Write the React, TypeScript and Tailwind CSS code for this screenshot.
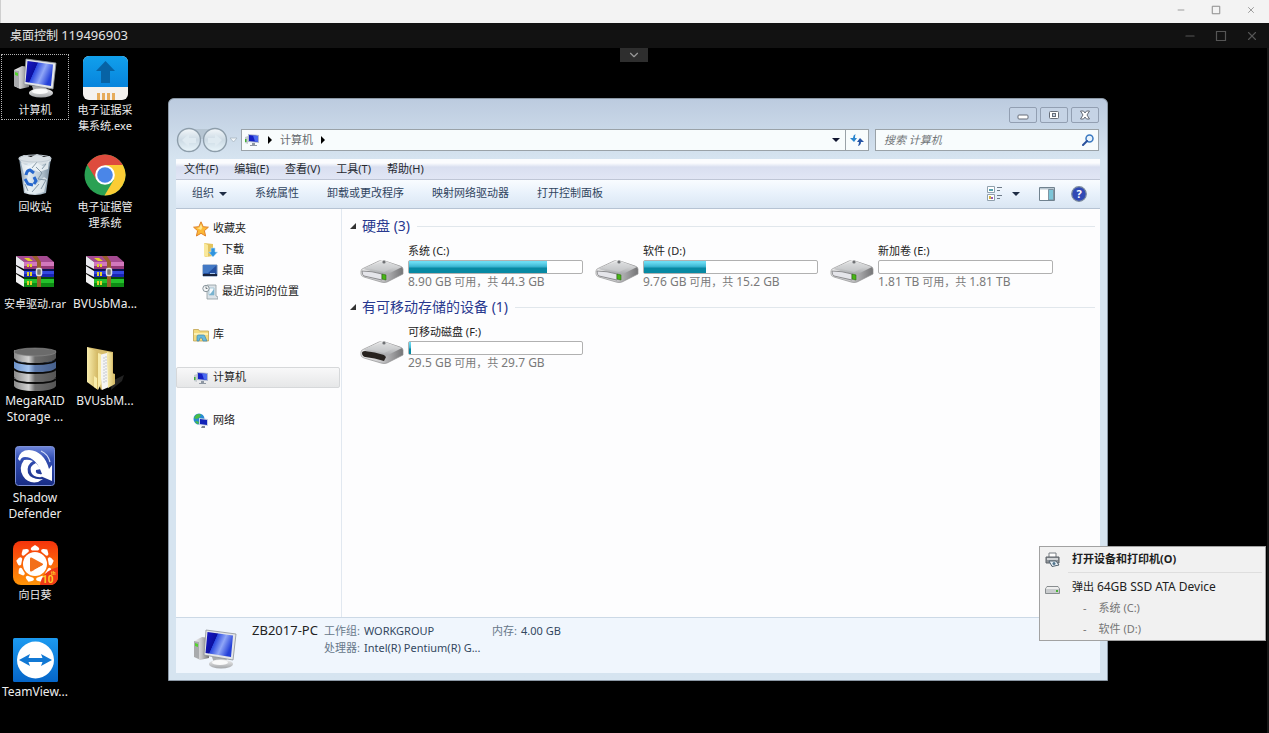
import { useState, type ReactNode } from 'react';
import { ChevronDown, Minus, X } from 'lucide-react';

// gradients shared by every drawing on the page
function Gradients() {
  return (
    <svg className="absolute h-0 w-0" aria-hidden="true">
      <defs>
        <linearGradient id="screen" x1="0" y1="0" x2="1" y2="0.4">
          <stop offset="0" stopColor="#1a1acc" />
          <stop offset="0.4" stopColor="#0c10a0" />
          <stop offset="0.42" stopColor="#2b49e0" />
          <stop offset="0.7" stopColor="#8fa6f7" />
          <stop offset="1" stopColor="#2440d8" />
        </linearGradient>
        <linearGradient id="metal" x1="0" y1="0" x2="0" y2="1">
          <stop offset="0" stopColor="#f4f4f4" />
          <stop offset="1" stopColor="#a3a5a8" />
        </linearGradient>
        <linearGradient id="metalSide" x1="0" y1="0" x2="1" y2="0">
          <stop offset="0" stopColor="#f5f5f5" />
          <stop offset="0.5" stopColor="#c4c4c6" />
          <stop offset="1" stopColor="#747476" />
        </linearGradient>
        <linearGradient id="steel" x1="0" y1="0" x2="1" y2="0">
          <stop offset="0" stopColor="#8a8a8a" />
          <stop offset="0.35" stopColor="#d2d2d2" />
          <stop offset="0.5" stopColor="#6c6c6c" />
          <stop offset="1" stopColor="#555" />
        </linearGradient>
        <linearGradient id="steelBlue" x1="0" y1="0" x2="1" y2="0">
          <stop offset="0" stopColor="#6d94cc" />
          <stop offset="0.35" stopColor="#a5c4ee" />
          <stop offset="0.5" stopColor="#5c79aa" />
          <stop offset="1" stopColor="#46608c" />
        </linearGradient>
        <linearGradient id="sky" x1="0" y1="0" x2="0" y2="1">
          <stop offset="0" stopColor="#11a0ec" />
          <stop offset="1" stopColor="#0784dc" />
        </linearGradient>
        <linearGradient id="viewer" x1="0" y1="0" x2="0" y2="1">
          <stop offset="0" stopColor="#1c9af0" />
          <stop offset="1" stopColor="#0565c8" />
        </linearGradient>
        <linearGradient id="orange" x1="0" y1="0" x2="0" y2="1">
          <stop offset="0" stopColor="#f5330c" />
          <stop offset="1" stopColor="#ff9508" />
        </linearGradient>
        <linearGradient id="shield" x1="0" y1="0" x2="0" y2="1">
          <stop offset="0" stopColor="#6e86da" />
          <stop offset="0.3" stopColor="#3450b4" />
          <stop offset="1" stopColor="#182c84" />
        </linearGradient>
        <linearGradient id="paper" x1="0" y1="0" x2="1" y2="0">
          <stop offset="0" stopColor="#f9eeae" />
          <stop offset="1" stopColor="#d3b863" />
        </linearGradient>
        <linearGradient id="glass" x1="0" y1="0" x2="1" y2="0">
          <stop offset="0" stopColor="#7b8fa0" />
          <stop offset="0.3" stopColor="#e2ecf3" />
          <stop offset="0.7" stopColor="#b4c5d1" />
          <stop offset="1" stopColor="#75899a" />
        </linearGradient>
        <linearGradient id="orb" x1="0" y1="0" x2="0" y2="1">
          <stop offset="0" stopColor="#f3f7fa" />
          <stop offset="0.5" stopColor="#ccdae4" />
          <stop offset="1" stopColor="#eaf6fb" />
        </linearGradient>
      </defs>
    </svg>
  );
}

function ComputerIcon({ className }: { className: string }) {
  return (
    <svg className={className} viewBox="0 0 44 40" aria-hidden="true">
      <path d="M1 12 9 8l7 1v20l-9 2-6-3z" fill="url(#metalSide)" />
      <path d="M1 12 6 13v17l-5-2z" fill="#a9abad" />
      <path d="M2 14l3 1v3l-3-1z" fill="#54d22e" />
      <path d="M19 28h15l-1 6H21z" fill="#a7aaad" />
      <ellipse cx="28" cy="35" rx="12" ry="4.500" fill="url(#metal)" />
      <ellipse cx="27" cy="33.500" rx="8" ry="2.500" fill="#fafafa" />
      <path d="M13 1 43 5 40 31 11 26z" fill="#e4e6e8" stroke="#8d9297" strokeWidth="0.8" />
      <path d="M14.500 3 40 6.500 38 28 12.500 24z" fill="url(#screen)" />
    </svg>
  );
}

function SmallComputerIcon() {
  return (
    <svg className="h-4 w-4 shrink-0" viewBox="0 0 16 16" aria-hidden="true">
      <path d="M1 5 4 4v8l-3-1z" fill="#c5cbd0" />
      <path d="M1 7h1.500v3H1z" fill="#3fae35" />
      <path d="M4 2 15 3v8L4 10z" fill="#aeb8d0" />
      <path d="M5 3 14 4v6L5 9z" fill="#1420c4" />
      <path d="M9 3.500 14 4v6L11 9.600z" fill="#4a6af0" />
      <path d="M8 11h3v2h2v1H6v-1h2z" fill="#8f98a3" />
    </svg>
  );
}

function CollectorIcon() {
  return (
    <svg className="h-11 w-[45px]" viewBox="0 0 45 44" aria-hidden="true">
      <rect width="45" height="44" rx="6" fill="#f4f2ef" />
      <path d="M6 0h33a6 6 0 0 1 6 6v25H0V6a6 6 0 0 1 6-6z" fill="url(#sky)" />
      <path d="M22.500 5 32 15h-5v12h-9V15h-5z" fill="#0763a5" />
      <path d="M14 37h3v7h-3zM19 37h3v7h-3zM24 37h3v7h-3zM29 37h3v7h-3z" fill="#e6ac5b" />
    </svg>
  );
}

function RecycleIcon() {
  return (
    <svg className="h-[42px] w-9" viewBox="0 0 36 42" aria-hidden="true">
      <path d="M2 4h32l-5 35q-11 4-22 0z" fill="url(#glass)" />
      <path d="M2 4 7 1l7 2 6-3 7 3 6-1 1 5-9 4-10-2-10 1z" fill="#d9e0e5" />
      <path d="M4 9l8 3 6-4 8 4 6-5-1 8-9 3-7-3-8 5z" fill="#f3f7fa" opacity="0.8" />
      <path d="M7 25l6 4 6 2 8-8 3 2-3 13-9 2-10-2z" fill="#edf3f7" opacity="0.7" />
      <path d="M19 13l6 6-4 6 8 1-5 9M8 30l3 7M22 30l-7 8M20 8l-5 6M29 10l-4 5" fill="none" stroke="#7b8e9e" strokeWidth="0.9" />
      <g fill="none" stroke="#2768cd" strokeWidth="3">
        <path d="M9 21q1-5 4-5l4 3" />
        <path d="M8 25l3 5 5 1" />
        <path d="M17 23l2 4-2 3" />
      </g>
      <ellipse cx="18" cy="4.500" rx="16" ry="3.500" fill="none" stroke="#c3cdd5" strokeWidth="1.200" />
    </svg>
  );
}

function ChromeIcon() {
  return (
    <svg className="h-[42px] w-[42px]" viewBox="0 0 42 42" aria-hidden="true">
      <circle cx="21" cy="21" r="20.500" fill="#2aa153" />
      <path d="M21 21 3.300 10.700A20.500 20.500 0 0 1 38.800 11H21z" fill="#de4b3d" />
      <path d="M3.300 10.700 12.500 26 21 12z" fill="#de4b3d" />
      <path d="M21 11h17.800A20.500 20.500 0 0 1 20.500 41.500L29.700 26z" fill="#fbcc35" />
      <circle cx="21" cy="21" r="9.800" fill="#fff" />
      <circle cx="21" cy="21" r="7.800" fill="#4a86e8" />
    </svg>
  );
}

function RarIcon() {
  return (
    <svg className="h-8 w-10" viewBox="0 0 40 32" aria-hidden="true">
      {/* three stacked books */}
      <path d="M1 0h31l7 6H9z" fill="#a54a91" />
      <path d="M9 6h30v7H9z" fill="#d278bd" />
      <path d="M9 10h30v3H9z" fill="#923777" />
      <path d="M1 0l8 6v7l-8-4z" fill="#e9e9ee" />
      <path d="M9 13h30v2H9z" fill="#0c1158" />
      <path d="M9 15h30v6H9z" fill="#1a24b4" />
      <path d="M9 15h30v3H9z" fill="#3347e0" />
      <path d="M1 10l8 5v6l-8-4z" fill="#e9e9ee" />
      <path d="M9 21h30v2H9z" fill="#064a0b" />
      <path d="M9 23h30v8H9z" fill="#0e8b15" />
      <path d="M9 23h30v4H9z" fill="#24c22b" />
      <path d="M1 18l8 5v8l-8-5z" fill="#f2f2f2" />
      <path d="M9 2h5l4 3h-5zM12 8h2v3h-2zM15 8h2v3h-2zM12 16h2v4h-2zM15 16h2v4h-2zM12 25h2v4h-2zM15 25h2v4h-2z" fill="#e5d22a" />
      <path d="M17 0h5l4 6v25h-4V6z" fill="#97602a" />
      <rect x="21.500" y="12.500" width="5" height="7" rx="1.500" fill="#777" stroke="#ddd" strokeWidth="1.500" />
    </svg>
  );
}

function RaidIcon() {
  return (
    <svg className="h-11 w-11" viewBox="0 0 44 44" aria-hidden="true">
      {[31, 22, 3].map(y => (
        <path key={y} d={`M1 ${y}q21 7 42 0v8q-3 5-21 5T1 ${y + 8}z`} fill="url(#steel)" />
      ))}
      <path d="M1 13q21 7 42 0v8q-3 5-21 5T1 21z" fill="url(#steelBlue)" />
      <path d="M1 13q3 4 21 4t21-4M1 22q3 4 21 4t21-4M1 32q3 4 21 4t21-4" fill="none" stroke="#0a0a0a" strokeWidth="2" />
      <ellipse cx="22" cy="5" rx="21" ry="4" fill="#6b6b6b" stroke="#909090" strokeWidth="0.6" />
    </svg>
  );
}

function FolderIcon() {
  return (
    <svg className="h-11 w-10" viewBox="0 0 40 44" aria-hidden="true">
      <path d="M27 34l12-6-2 6-11 9z" fill="#232323" />
      <path d="M2 0l26 5v28l-12 10z" fill="#d8be6e" />
      <path d="M14 8l8-2 2 34-7 3z" fill="#f5f5f4" />
      <path d="M19 10v27M21 9v27" stroke="#b7bcc7" strokeWidth="0.8" strokeDasharray="2 1" />
      <path d="M22 5l5 1v20l3 1v10l-7 4z" fill="url(#paper)" />
      <path d="M2 0l11 5v38L2 35z" fill="url(#paper)" />
      <path d="M13 6l3 1v30l-3 6zM9 29l3 2v11l-3-2z" fill="#f8eca9" />
    </svg>
  );
}

function ShadowIcon() {
  return (
    <svg className="h-10 w-10" viewBox="0 0 40 40" aria-hidden="true">
      <rect x="0.500" y="0.500" width="39" height="39" rx="3" fill="url(#shield)" stroke="#7c90d6" />
      <path d="M3 13Q5 4 14 4q15 1 20 19l3-4v16l-14-6 4-1Q21 11 10 11q-4 0-5 4z" fill="#fff" />
      <path d="M9 14q-6 8-1 16t15 6l5-3q-12 1-15-6-2-8 5-12-5-2-9-1z" fill="#fff" />
      <path d="M21 17q-7 3-5 9t11 5l-2-3q-5 0-4-4l5-1z" fill="#fff" />
      <path d="M26 5q7 3 9 11" fill="none" stroke="#d3dcfa" strokeWidth="1.200" />
    </svg>
  );
}

function SunflowerIcon() {
  return (
    <svg className="h-11 w-[45px]" viewBox="0 0 45 44" aria-hidden="true">
      <rect width="45" height="44" rx="8" fill="url(#orange)" />
      <g fill="#fff">
        {[0, 40, 80, 120, 160, 200, 240, 280, 320].map(a => (
          <path key={a} d="M22 4l3 2q2.500 2 0 3.500h-6q-2.500-1.500 0-3.500z" transform={`rotate(${a} 22 23)`} />
        ))}
        <circle cx="22" cy="23" r="12" />
      </g>
      <path d="M18 17.500l11 6-11 6z" fill="#f3701b" stroke="#f3701b" strokeWidth="2" strokeLinejoin="round" />
      <path d="M21 29l9-5v4l-6 3z" fill="#fff" />
      <path d="M45 26v10a8 8 0 0 1-8 8H27q2-14 18-18z" fill="#ee3a16" />
      <text x="29" y="42" fontSize="10" fontWeight="700" fontFamily="Roboto, sans-serif" fill="#ffce2b">10</text>
      <text x="38" y="34" fontSize="5" fontWeight="700" fontFamily="Roboto, sans-serif" fill="#ffce2b">th</text>
    </svg>
  );
}

function ViewerIcon() {
  return (
    <svg className="h-11 w-[45px]" viewBox="0 0 45 44" aria-hidden="true">
      <rect width="45" height="44" rx="1.500" fill="url(#viewer)" />
      <circle cx="22.500" cy="22" r="18.500" fill="#fff" />
      <path d="M6 22l11-6-1.500 4h14L28 16l11 6-11 6 1.500-4h-14l1.500 4z" fill="#1178d4" />
    </svg>
  );
}

function DriveIcon({ removable }: { removable?: boolean }) {
  return (
    <svg className="mb-[7px] h-6 w-11 shrink-0 self-end" viewBox="0 0 44 24" aria-hidden="true">
      <path d="M1 12Q1 10 4 9L19 2q3-1 6 0l15 5q3 1 3 3v5L27 23q-3 1-6 0L4 18q-3-1-3-3z" fill="url(#metalSide)" stroke="#8f8f91" strokeWidth="0.700" />
      <path d="M3 10 22 1l20 7-16 8z" fill="url(#metal)" />
      <path d="M7 9 23 2l14 5-13 6z" fill="#d0d1d3" opacity="0.500" />
      <circle cx="24" cy="3" r="1.600" fill="#707275" />
      {removable ? (
        <path d="M2 13q0-2 3-2 10 1 19 4l2 2-2 4q-9-3-19-4-3-1-3-4z" fill="#27221f" />
      ) : (
        <>
          <path d="M2 12q10 0 20 3v6L4 17q-2-1-2-5z" fill="#e5e5ea" stroke="#77777a" strokeWidth="0.800" />
          <path d="M22 15l4 1v5l-4-1z" fill="#48b516" stroke="#2e6d12" strokeWidth="0.600" />
        </>
      )}
    </svg>
  );
}

interface DesktopItem {
  label: string;
  icon: ReactNode;
  latin?: boolean; // Latin-only names are set one size up
}

const COLUMNS: DesktopItem[][] = [
  [
    { label: '计算机', icon: <ComputerIcon className="h-10 w-11" /> },
    { label: '回收站', icon: <RecycleIcon /> },
    { label: '安卓驱动.rar', icon: <RarIcon /> },
    { label: 'MegaRAID\nStorage ...', icon: <RaidIcon />, latin: true },
    { label: 'Shadow\nDefender', icon: <ShadowIcon />, latin: true },
    { label: '向日葵', icon: <SunflowerIcon /> },
    { label: 'TeamView...', icon: <ViewerIcon />, latin: true },
  ],
  [
    { label: '电子证据采\n集系统.exe', icon: <CollectorIcon /> },
    { label: '电子证据管\n理系统', icon: <ChromeIcon /> },
    { label: 'BVUsbMa...', icon: <RarIcon />, latin: true },
    { label: 'BVUsbM...', icon: <FolderIcon />, latin: true },
  ],
];

function DesktopIcons() {
  const [selected, setSelected] = useState('计算机');

  return (
    <div className="flex pt-[6px]">
      {COLUMNS.map((items, i) => (
        <ul key={i} className="w-[70px]">
          {items.map(item => (
            <li key={item.label} className="flex h-[97px] items-start justify-center">
              <button
                onClick={() => setSelected(item.label)}
                className={`flex min-h-[66px] w-[68px] flex-col items-center border border-dotted ${selected === item.label ? 'border-[#b5b5b5]' : 'border-transparent'}`}
              >
                <span className="flex h-[45px] items-center justify-center">{item.icon}</span>
                <span className={`mt-[2px] whitespace-pre text-center leading-4 text-[#ededed] ${item.latin ? 'text-[12px]' : 'text-[11px]'}`}>
                  {item.label}
                </span>
              </button>
            </li>
          ))}
        </ul>
      ))}
    </div>
  );
}

function CaptionButtons() {
  return (
    <div className="flex justify-end gap-[3px] pr-px">
      <button aria-label="最小化" className="flex h-4 w-7 items-center justify-center rounded-xs border border-[#929fb2] bg-[#c5d3e5]">
        <svg className="h-3 w-3" viewBox="0 0 12 12"><rect x="1" y="6" width="10" height="4" rx="1" fill="#fff" stroke="#666d78" /></svg>
      </button>
      <button aria-label="最大化" className="flex h-4 w-7 items-center justify-center rounded-xs border border-[#929fb2] bg-[#c5d3e5]">
        <svg className="h-3 w-3" viewBox="0 0 12 12">
          <rect x="1.500" y="2.500" width="9" height="7" rx="1" fill="#fff" stroke="#666d78" />
          <rect x="4.500" y="4.500" width="3" height="3" fill="#c5d3e5" stroke="#666d78" />
        </svg>
      </button>
      <button aria-label="关闭" className="flex h-4 w-7 items-center justify-center rounded-xs border border-[#929fb2] bg-[#c5d3e5]">
        <svg className="h-3 w-3" viewBox="0 0 12 12">
          <path d="M1.500 2h3L6 4l1.500-2h3L8 6l2.500 4h-3L6 8l-1.500 2h-3L4 6z" fill="#fff" stroke="#666d78" strokeLinejoin="round" />
        </svg>
      </button>
    </div>
  );
}

function AddressRow() {
  return (
    <div className="flex h-[22px] items-center pr-px">
      <svg className="h-7 w-[52px] shrink-0" viewBox="0 0 52 28" role="img" aria-label="后退 前进">
        <path d="M13 3h26v6q-6 4-13 4T13 9z" fill="#b6c5d2" />
        <circle cx="13" cy="14" r="11.500" fill="url(#orb)" stroke="#8d9daa" strokeWidth="1.400" />
        <circle cx="39" cy="14" r="11.500" fill="url(#orb)" stroke="#8d9daa" strokeWidth="1.400" />
        <path d="M6 14l7-6v4h7v5h-7v4zM46 14l-7-6v4h-7v5h7v4z" fill="#dfeaf1" />
      </svg>
      <svg className="mx-px h-[6px] w-[9px] shrink-0" viewBox="0 0 9 6" aria-hidden="true">
        <path d="M1 1h7L4.500 5z" fill="#f3f8fb" stroke="#a8b5c0" strokeWidth="0.800" />
      </svg>
      <div className="ml-[2px] flex h-[22px] flex-1 items-center border border-[#9aa2a8] bg-[#f8fcfd]">
        <div className="flex flex-1 items-center gap-2 pl-[2px]">
          <SmallComputerIcon />
          <svg className="h-2 w-1" viewBox="0 0 4 8" aria-hidden="true"><path d="M0 0l4 4-4 4z" /></svg>
          <button className="text-[#686c70]">计算机</button>
          <svg className="h-2 w-1" viewBox="0 0 4 8" aria-hidden="true"><path d="M0 0l4 4-4 4z" /></svg>
        </div>
        <button aria-label="历史记录" className="flex h-full w-[18px] items-center justify-center">
          <svg className="h-1 w-2" viewBox="0 0 8 4"><path d="M0 0h8L4 4z" fill="#101530" /></svg>
        </button>
        <button aria-label="刷新" className="flex h-full w-[23px] items-center justify-center border-l border-[#9aa2a8]">
          <svg className="h-3 w-[14px]" viewBox="0 0 14 12">
            <path d="M5.500 0Q3 1 3 4H0l4 4 3-4H5q0-2 .5-4z" fill="#2a86cf" />
            <path d="M8 12q3-1 3-4h3l-4-4-3 4h2q0 2-1 4z" fill="#2654a5" />
          </svg>
        </button>
      </div>
      <label className="ml-[6px] flex h-[22px] w-[224px] items-center border border-[#9aa2a8] bg-[#f8fcfd] pr-1 pl-2">
        <input
          type="text"
          aria-label="搜索"
          placeholder="搜索 计算机"
          className="min-w-0 flex-1 bg-transparent text-[11px] italic outline-none placeholder:text-[#727679]"
        />
        <svg className="h-3 w-3" viewBox="0 0 12 12" aria-hidden="true">
          <circle cx="7.500" cy="4.500" r="3.500" fill="#e9f3fc" stroke="#3a78c0" strokeWidth="1.500" />
          <path d="M5 7 1 11" stroke="#29509c" strokeWidth="2" strokeLinecap="round" />
        </svg>
      </label>
    </div>
  );
}

function MenuBar() {
  return (
    <nav className="flex h-[21px] items-center gap-4 border-b border-[#bfc6d6] bg-linear-to-b from-[#fbfcfe] from-20% via-[#d9dff0] via-40% to-[#e1e6f5] px-2 text-[#26292f]">
      {['文件(F)', '编辑(E)', '查看(V)', '工具(T)', '帮助(H)'].map(name => (
        <button key={name}>{name}</button>
      ))}
    </nav>
  );
}

function ToolBar() {
  return (
    <div className="flex h-[29px] items-center border-b border-[#b6c3d3] bg-linear-to-b from-[#f9fcff] via-[#e8f1fb] to-[#dae6f3] pr-[13px] pb-px pl-4 text-[#31455f]">
      <div className="flex flex-1 items-center gap-7">
        <button className="flex items-center gap-[5px]">
          组织
          <svg className="h-1 w-2" viewBox="0 0 8 4" aria-hidden="true"><path d="M0 0h8L4 4z" fill="#1e2c45" /></svg>
        </button>
        {['系统属性', '卸载或更改程序', '映射网络驱动器', '打开控制面板'].map(name => (
          <button key={name}>{name}</button>
        ))}
      </div>
      <button aria-label="更改视图" className="mr-[19px] flex items-center gap-[9px]">
        <svg className="h-[15px] w-4" viewBox="0 0 16 15">
          <path d="M.5.500h7v6h-7zM.5 8.500h7v6h-7z" fill="#fff" stroke="#90a0ad" />
          <path d="M2 3h4v2H2z" fill="#56a2ae" />
          <path d="M2 10h2v3H2z" fill="#d8b63f" />
          <path d="M4 11h2v2H4z" fill="#9859b4" />
          <path d="M10 1.500h5M10 4.500h3M10 9.500h5M10 12.500h3" stroke="#6f7b88" />
        </svg>
        <svg className="h-1 w-2" viewBox="0 0 8 4"><path d="M0 0h8L4 4z" fill="#1e2c45" /></svg>
      </button>
      <button aria-label="预览窗格" className="mr-4">
        <svg className="h-[14px] w-4" viewBox="0 0 16 14">
          <path d="M.5.500h15v13H.5z" fill="#fff" stroke="#71828f" />
          <path d="M1 1h14v1.500H1z" fill="#b9c7d1" />
          <path d="M9.500 2.500h5v10.500h-5z" fill="#7cc5d8" stroke="#71828f" strokeWidth="0.800" />
        </svg>
      </button>
      <button aria-label="帮助">
        <svg className="h-4 w-4" viewBox="0 0 16 16">
          <circle cx="8" cy="8" r="7.300" fill="#3049b5" stroke="#7b8b9e" strokeWidth="1.200" />
          <text x="8" y="12" fontSize="11" fontWeight="700" textAnchor="middle" fill="#fff">?</text>
        </svg>
      </button>
    </div>
  );
}

const StarIcon = () => (
  <svg className="h-4 w-4 shrink-0" viewBox="0 0 16 16" aria-hidden="true">
    <path d="M8 .8l2.200 4.900 5.200.5-4 3.500 1.200 5.300L8 12.300 3.400 15l1.200-5.300-4-3.500 5.200-.5z" fill="#fcb936" stroke="#e0822a" />
    <path d="M8 3l1.300 3.500L8 9 4 7l2.500-.5z" fill="#fee692" />
  </svg>
);

const DownloadIcon = () => (
  <svg className="h-4 w-4 shrink-0" viewBox="0 0 16 16" aria-hidden="true">
    <path d="M2 1l9 1v12l-7 1-2-1z" fill="#e3c45f" />
    <path d="M2 1l4 2v12l-4-1z" fill="#f9e89b" />
    <path d="M9 6h4v4h2.500L11 15 6.500 10H9z" fill="#2f94df" stroke="#b8ddf4" strokeWidth="0.600" />
  </svg>
);

const DesktopIcon = () => (
  <svg className="h-4 w-4 shrink-0" viewBox="0 0 16 16" aria-hidden="true">
    <path d="M1 2h14v11H1z" fill="#234f9f" stroke="#6c8bb5" />
    <path d="M1 2h14L6 10H1z" fill="#4379c5" />
    <path d="M1 11h14v2H1z" fill="#18233c" />
    <path d="M8 10h5v1H8z" fill="#a8c6ed" />
  </svg>
);

const RecentIcon = () => (
  <svg className="h-4 w-4 shrink-0" viewBox="0 0 16 16" aria-hidden="true">
    <path d="M5 1h9v11l2 1v2H5z" fill="#dce3e8" stroke="#8e999f" strokeWidth="0.800" />
    <path d="M7 4h5v7H7z" fill="#f5fafd" stroke="#90b7cc" strokeWidth="0.700" />
    <path d="M9 9l3-4v6H7z" fill="#79b3cf" />
    <circle cx="4" cy="4.500" r="3.200" fill="#f3f5f6" stroke="#89959c" />
    <path d="M4 2.500v2h1.500" fill="none" stroke="#545e65" strokeWidth="0.800" />
  </svg>
);

const LibraryIcon = () => (
  <svg className="h-4 w-4 shrink-0" viewBox="0 0 16 16" aria-hidden="true">
    <path d="M.5 2.500h5l1 1.500h9v10H.5z" fill="#f4db7f" stroke="#c0a352" strokeWidth="0.800" />
    <path d="M1 6h14v2H1z" fill="#fcf0b2" />
    <path d="M4 14V9.500Q4 8 5.500 8h5Q12 8 12 9.500l2 4.500h-4l-1-3H7l-1 3z" fill="#69b9db" stroke="#3d87ac" strokeWidth="0.700" />
  </svg>
);

const NetworkIcon = () => (
  <svg className="h-4 w-4 shrink-0" viewBox="0 0 16 16" aria-hidden="true">
    <circle cx="6" cy="6" r="5.500" fill="#278bd1" />
    <path d="M3 2q3-2 5 0L6 5l-3 1-2-1zM3 8l3 1-1 2.500L2 9z" fill="#4bbd46" />
    <path d="M6 5l9 1v7l-9-1z" fill="#c8d1e5" />
    <path d="M7 6l7 1v5l-7-1z" fill="#1224b8" />
    <path d="M9 13h3v2H8z" fill="#7c8591" />
  </svg>
);

interface NavItem {
  label: string;
  icon: ReactNode;
  nested?: boolean;
}

const NAV_GROUPS: NavItem[][] = [
  [
    { label: '收藏夹', icon: <StarIcon /> },
    { label: '下载', icon: <DownloadIcon />, nested: true },
    { label: '桌面', icon: <DesktopIcon />, nested: true },
    { label: '最近访问的位置', icon: <RecentIcon />, nested: true },
  ],
  [{ label: '库', icon: <LibraryIcon /> }],
  [{ label: '计算机', icon: <SmallComputerIcon /> }],
  [{ label: '网络', icon: <NetworkIcon /> }],
];

function NavPane() {
  const [active, setActive] = useState('计算机');

  return (
    <aside className="flex w-[166px] shrink-0 flex-col gap-[22px] border-r border-[#e1e8f0] pt-[9px] pr-px">
      {NAV_GROUPS.map((group, i) => (
        <ul key={i}>
          {group.map(item => (
            <li key={item.label}>
              <button
                onClick={() => setActive(item.label)}
                className={`flex h-[21px] w-full items-center gap-1 rounded-xs border ${item.nested ? 'pl-[25px]' : 'pl-4'} ${active === item.label ? 'border-[#d6d8da] bg-linear-to-b from-[#f8f8f9] to-[#e6e7e8]' : 'border-transparent'}`}
              >
                {item.icon}
                {item.label}
              </button>
            </li>
          ))}
        </ul>
      ))}
    </aside>
  );
}

interface Drive {
  name: string;
  free: string;
  total: string;
  used: number; // percent
  removable?: boolean;
}

const DRIVE_GROUPS: { title: string; drives: Drive[] }[] = [
  {
    title: '硬盘 (3)',
    drives: [
      { name: '系统 (C:)', free: '8.90 GB', total: '44.3 GB', used: 80 },
      { name: '软件 (D:)', free: '9.76 GB', total: '15.2 GB', used: 36 },
      { name: '新加卷 (E:)', free: '1.81 TB', total: '1.81 TB', used: 0 },
    ],
  },
  {
    title: '有可移动存储的设备 (1)',
    drives: [{ name: '可移动磁盘 (F:)', free: '29.5 GB', total: '29.7 GB', used: 1, removable: true }],
  },
];

function DriveTile({ drive }: { drive: Drive }) {
  return (
    <li className="flex w-[235px] items-center gap-1">
      <DriveIcon removable={drive.removable} />
      <div className="w-[175px]">
        <p className="leading-4">{drive.name}</p>
        <div
          role="meter"
          aria-label={drive.name}
          aria-valuenow={drive.used}
          aria-valuemin={0}
          aria-valuemax={100}
          className="mt-px h-[14px] rounded-xs border border-[#b1b1b1] bg-white"
        >
          <div
            className="h-full bg-linear-to-b from-[#6bdcf3] from-10% via-[#3cb8d4] via-45% to-[#0789a3] to-60%"
            style={{ width: `${drive.used}%` }}
          />
        </div>
        <p className="whitespace-nowrap leading-4 text-[#7a7a7a]">
          <span className="text-[12px]">{drive.free}</span> 可用，共 <span className="text-[12px]">{drive.total}</span>
        </p>
      </div>
    </li>
  );
}

function DriveList() {
  return (
    <main className="min-w-0 flex-1 pt-[7px] pr-[5px] pl-2">
      {DRIVE_GROUPS.map(group => (
        <section key={group.title} className="mb-[7px]">
          <h2 className="flex h-5 items-center gap-[5px] text-[14px] leading-5 text-[#28388f]">
            <svg className="h-[6px] w-[7px]" viewBox="0 0 7 6" aria-hidden="true"><path d="M6 0v6H0z" fill="#333" /></svg>
            {group.title}
            <span className="ml-[2px] h-px flex-1 bg-[#e1e7ec]" />
          </h2>
          <ul className="flex flex-wrap pt-[7px] pl-[10px]">
            {group.drives.map(drive => (
              <DriveTile key={drive.name} drive={drive} />
            ))}
          </ul>
        </section>
      ))}
    </main>
  );
}

function DetailsPane() {
  return (
    <footer className="flex h-14 shrink-0 items-start border-t border-[#ccd9e6] bg-[#f0f6fd] pl-4">
      <ComputerIcon className="mt-[11px] h-10 w-[46px] shrink-0" />
      <p className="mt-1 ml-[14px] w-[72px] text-[13px] leading-[17px] text-[#222]">ZB2017-PC</p>
      <dl className="mt-1 grid grid-cols-[168px_auto] leading-[17px] text-[#33485f]">
        <div className="flex gap-1">
          <dt className="text-[#67788a]">工作组:</dt>
          <dd>WORKGROUP</dd>
        </div>
        <div className="flex gap-1">
          <dt className="text-[#67788a]">内存:</dt>
          <dd>4.00 GB</dd>
        </div>
        <div className="flex gap-1">
          <dt className="text-[#67788a]">处理器:</dt>
          <dd className="whitespace-nowrap">Intel(R) Pentium(R) G...</dd>
        </div>
      </dl>
    </footer>
  );
}

function ExplorerWindow() {
  return (
    <div className="absolute top-[50px] right-[159px] bottom-[52px] left-[168px] flex flex-col rounded-t-md border border-[#8b98a5] bg-[#d6e4f0] bg-linear-to-b from-[#bccbdf] to-[#d6e4f0] to-[60px] px-[7px] pt-2 pb-[7px] text-[11px] text-[#222]">
      <CaptionButtons />
      <div className="pt-[6px] pb-2">
        <AddressRow />
      </div>
      <MenuBar />
      <ToolBar />
      <div className="flex min-h-0 flex-1 bg-[#fdfdfe]">
        <NavPane />
        <DriveList />
      </div>
      <DetailsPane />
    </div>
  );
}

function EjectMenu() {
  return (
    <div role="menu" className="absolute right-px bottom-[92px] flex w-[227px] flex-col border border-[#a2a2a2] bg-[#f1f1f1] text-[11px] text-[#1d1d1d]">
      <button role="menuitem" className="flex h-[25px] items-center gap-3 pl-[5px] font-bold">
        <svg className="h-[15px] w-[15px]" viewBox="0 0 15 15" aria-hidden="true">
          <path d="M4 5V1h7v4" fill="#fff" stroke="#777c82" />
          <path d="M1 5h13v6H1z" fill="#8e9398" stroke="#5c6268" />
          <path d="M2 6h11v2H2z" fill="#d2d5d8" />
          <path d="M4 9h7l3 4-7 1.500z" fill="#e9f2f8" stroke="#51606e" />
          <circle cx="9" cy="11.500" r="1.500" fill="#50748d" />
        </svg>
        打开设备和打印机(O)
      </button>
      <hr className="mr-[3px] ml-7 border-[#dedede]" />
      <button role="menuitem" className="mt-[3px] flex h-[22px] items-center gap-3 pl-[5px]">
        <svg className="mt-[6px] h-2 w-[15px]" viewBox="0 0 15 8" aria-hidden="true">
          <path d="M2 .5h11L14.500 3v4.500h-14V3z" fill="#c9ccce" stroke="#7e8386" strokeWidth="0.900" />
          <path d="M2 1h11l1 2H1z" fill="#eee" />
          <path d="M11 4h2v2h-2z" fill="#4bb238" />
        </svg>
        <span>弹出 <span className="text-[12px]">64GB SSD ATA Device</span></span>
      </button>
      {['系统 (C:)', '软件 (D:)'].map(name => (
        <p key={name} className="flex h-[21px] items-center gap-3 pl-[43px] text-[#767676]">
          <span>-</span>
          {name}
        </p>
      ))}
    </div>
  );
}

const MaximizeIcon = ({ className }: { className: string }) => (
  <svg className={className} viewBox="0 0 12 12" aria-hidden="true">
    <path d="M1.500 1.500h9v9h-9z" fill="none" stroke="currentColor" strokeWidth="1.200" />
  </svg>
);

export default function App() {
  return (
    <div className="flex min-h-screen flex-col bg-black font-['Noto_Sans','Noto_Sans_CJK_SC',sans-serif]">
      <Gradients />

      {/* outer window caption */}
      <div className="flex h-[23px] items-center justify-end gap-[25px] border-l border-[#cfcfcf] bg-[#f3f3f3] pr-[13px] pb-1 text-[#8b8b8b]">
        <button aria-label="最小化"><Minus size={10} strokeWidth={2} /></button>
        <button aria-label="最大化"><MaximizeIcon className="h-[10px] w-[10px]" /></button>
        <button aria-label="关闭"><X size={10} strokeWidth={2} /></button>
      </div>

      {/* remote session caption */}
      <header className="flex h-[25px] items-center bg-[#121212] pr-[10px] pl-[10px]">
        <h1 className="flex-1 text-[12px] leading-4 text-[#e4e4e4]">
          桌面控制 <span className="text-[13px]">119496903</span>
        </h1>
        <div className="flex items-center gap-[18px] text-[#555]">
          <button aria-label="最小化会话"><Minus size={14} strokeWidth={2} /></button>
          <button aria-label="最大化会话"><MaximizeIcon className="h-3 w-3" /></button>
          <button aria-label="关闭会话"><X size={14} strokeWidth={2} /></button>
        </div>
      </header>

      <div className="relative min-h-[684px] flex-1 border-r-2 border-[#171717]">
        <DesktopIcons />
        <button aria-label="展开工具栏" className="absolute top-0 left-1/2 flex h-[14px] w-7 -translate-x-1/2 items-center justify-center bg-[#2e2e2e] text-[#999]">
          <ChevronDown size={14} />
        </button>
        <ExplorerWindow />
        <EjectMenu />
      </div>

      {/* top edge of the taskbar */}
      <div className="h-px bg-[#57657c]" />
    </div>
  );
}
